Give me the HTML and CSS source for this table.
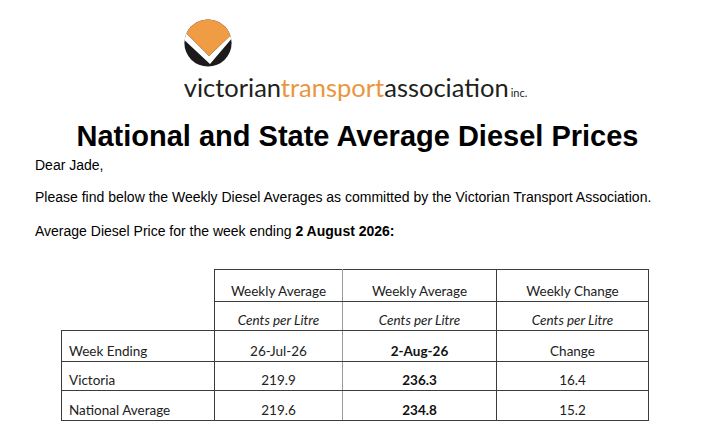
FILE: index.html
```html
<!DOCTYPE html>
<html lang="en">
<head>
<meta charset="utf-8">
<title>National and State Average Diesel Prices</title>
<link rel="stylesheet" href="styles.css">
</head>
<body>
<header class="brand">
  <div class="brand-inner">
    <svg class="brand-mark" width="48" height="48" viewBox="0 0 48 48" aria-hidden="true">
      <defs>
        <clipPath id="disc"><circle cx="24" cy="24" r="23.6"/></clipPath>
      </defs>
      <g clip-path="url(#disc)">
        <rect x="0" y="0" width="48" height="48" fill="#1c1a1b"/>
        <polygon points="-2,10 25,37 50,13 50,17 26,45 -2,19" fill="#ffffff"/>
        <polygon points="-2,-2 50,-2 50,13 25,37 -2,10" fill="#ef9c45"/>
      </g>
    </svg>
    <div class="wordmark">victorian<span class="accent">transport</span>association<span class="inc">inc.</span></div>
  </div>
</header>

<h1 class="title">National and State Average Diesel Prices</h1>

<main class="letter">
  <p>Dear Jade,</p>
  <p>Please find below the Weekly Diesel Averages as committed by the Victorian Transport Association.</p>
  <p class="lead">Average Diesel Price for the week ending <strong>2 August 2026:</strong></p>

  <table class="prices">
    <colgroup>
      <col class="c-label">
      <col class="c-prev">
      <col class="c-curr">
      <col class="c-chg">
    </colgroup>
    <tbody>
      <tr class="r-head">
        <td class="blank" rowspan="2"></td>
        <td class="col-prev">Weekly Average</td>
        <td>Weekly Average</td>
        <td>Weekly Change</td>
      </tr>
      <tr class="r-unit">
        <td class="col-prev"><em>Cents per Litre</em></td>
        <td><em>Cents per Litre</em></td>
        <td><em>Cents per Litre</em></td>
      </tr>
      <tr class="r-week">
        <td class="label">Week Ending</td>
        <td class="col-prev">26-Jul-26</td>
        <td><strong>2-Aug-26</strong></td>
        <td>Change</td>
      </tr>
      <tr class="r-vic">
        <td class="label">Victoria</td>
        <td class="col-prev">219.9</td>
        <td><strong>236.3</strong></td>
        <td>16.4</td>
      </tr>
      <tr class="r-nat">
        <td class="label">National Average</td>
        <td class="col-prev">219.6</td>
        <td><strong>234.8</strong></td>
        <td>15.2</td>
      </tr>
    </tbody>
  </table>
</main>
</body>
</html>
```

FILE: styles.css
```css
html, body {
  margin: 0;
  padding: 0;
  background: #ffffff;
}

body {
  font-family: "Liberation Sans", Arial, sans-serif;
  color: #000000;
}

/* ---------- brand header ---------- */
.brand {
  display: flex;
  justify-content: center;
  padding-top: 19px;
}

.brand-inner {
  display: flex;
  flex-direction: column;
  align-items: flex-start;
  margin-left: -4px;
}

.brand-mark {
  display: block;
  margin-left: 0;
}

.wordmark {
  margin-top: 5px;
  font-family: Lato, "Open Sans", sans-serif;
  font-size: 25.5px;
  line-height: 30px;
  color: #231f20;
  letter-spacing: 0;
  white-space: nowrap;
}

.wordmark .accent {
  color: #e9963e;
}

.wordmark .inc {
  font-size: 11px;
  margin-left: 2px;
}

/* ---------- title ---------- */
.title {
  margin: 12px 0 0;
  text-align: center;
  font-family: "Liberation Sans", Arial, sans-serif;
  font-weight: bold;
  font-size: 29px;
  line-height: 32px;
}

/* ---------- letter body ---------- */
.letter {
  padding: 0 35px;
}

.letter p {
  margin: 16px 0 0;
  font-size: 14px;
  line-height: 16px;
}

.letter p:first-child {
  margin-top: 5px;
}

.letter p.lead {
  margin-top: 18px;
}

/* ---------- table ---------- */
.prices {
  margin: 30px 0 0 26px;
  border-collapse: collapse;
  table-layout: fixed;
  width: 587px;
  font-family: Lato, "Open Sans", sans-serif;
  font-size: 13.5px;
  color: #222222;
}

.c-label { width: 153px; }
.c-prev  { width: 128px; }
.c-curr  { width: 154px; }
.c-chg   { width: 152px; }

.prices td {
  border: 1px solid #3c3c3c;
  height: 29px;
  padding: 0 7px 2px;
  vertical-align: bottom;
  text-align: center;
  line-height: 16px;
  box-sizing: border-box;
}

.prices td.blank {
  border: none;
}

.prices td.label {
  text-align: left;
}

.prices td.col-prev {
  border-right-color: #9a9a9a;
}

.prices .r-unit td {
  border-top-color: #a8a8a8;
}

.prices .r-nat td {
  border-top-color: #a8a8a8;
}

.prices .r-head td {
  height: 32px;
}

.prices .r-week td {
  height: 31px;
}

.prices .r-nat td {
  height: 30px;
}

.prices em {
  font-style: italic;
}

.prices strong {
  font-weight: bold;
  color: #111111;
}
```
